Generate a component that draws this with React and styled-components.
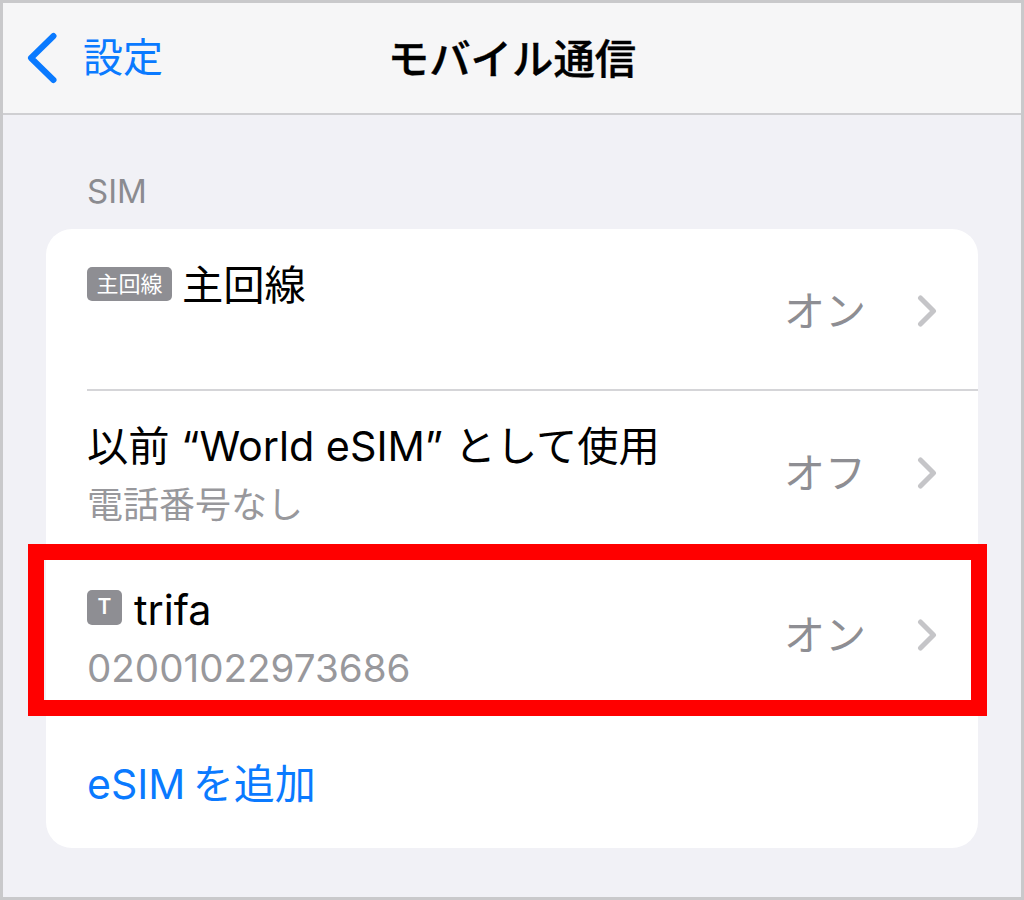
import React from "react";
import styled, { createGlobalStyle } from "styled-components";

const Global = createGlobalStyle`
  html, body { margin: 0; padding: 0; background: #fff; }
  body { font-family: "Inter", "Noto Sans CJK JP", sans-serif; }
`;

const Frame = styled.div`
  box-sizing: border-box;
  width: 1024px;
  height: 900px;
  border: 3px solid #c9c9cb;
  background: #f1f1f6;
  display: flex;
  flex-direction: column;
`;

const NavBar = styled.header`
  box-sizing: border-box;
  height: 112px;
  flex: none;
  background: #f6f6f7;
  border-bottom: 2px solid #cfcfd2;
  display: grid;
  grid-template-columns: 1fr auto 1fr;
  align-items: center;
`;

const Back = styled.div`
  display: flex;
  align-items: center;
  gap: 25px;
  margin-left: 23px;
  color: #0a7aff;
  font-size: 40px;
  line-height: 48px;
`;

const Title = styled.h1`
  margin: 2px 0 0;
  font-size: 41.4px;
  line-height: 48px;
  font-weight: 500;
  -webkit-text-stroke: 0.4px #000;
  color: #000;
`;

const Content = styled.main`
  flex: 1;
  padding: 54px 43px 48px;
  display: flex;
  flex-direction: column;
`;

const SectionLabel = styled.div`
  font-size: 33px;
  line-height: 44px;
  color: #8b8b90;
  padding-left: 41px;
  margin-bottom: 16px;
`;

const Card = styled.section`
  background: #fff;
  border-radius: 26px;
  display: flex;
  flex-direction: column;
  position: relative;
`;

const Row = styled.div`
  box-sizing: border-box;
  height: ${(p) => p.$h}px;
  display: flex;
  align-items: flex-start;
  justify-content: space-between;
  padding: ${(p) => p.$top}px 41px 0 41px;
  position: relative;
`;

const Divider = styled.div`
  height: 1.5px;
  margin-left: 41px;
  background: #d5d5d8;
`;

const Texts = styled.div`
  display: flex;
  flex-direction: column;
`;

const Main = styled.div`
  display: flex;
  align-items: center;
  gap: ${(p) => p.$gap || 10}px;
  font-size: 41.3px;
  line-height: 52px;
  color: #000;
  white-space: nowrap;
`;

const Sub = styled.div`
  font-size: ${(p) => p.$size || 36}px;
  line-height: 46px;
  margin-top: ${(p) => p.$mt || 10}px;
  color: #98989c;
  white-space: nowrap;
`;

const Badge = styled.span`
  box-sizing: border-box;
  height: 34px;
  width: 85px;
  margin-bottom: 2px;
  border-radius: 5px;
  background: #8e8e93;
  color: #fff;
  font-size: 22px;
  line-height: 34px;
  display: inline-flex;
  align-items: center;
  justify-content: center;
  flex: none;
`;

const SquareBadge = styled(Badge)`
  width: 35px;
  height: 35px;
  font-size: 21px;
  font-weight: 600;
  margin-bottom: 5px;
`;

const Accessory = styled.div`
  display: flex;
  align-items: center;
  gap: 51px;
  color: #8e8e93;
  font-size: 41px;
  line-height: 52px;
  position: absolute;
  right: 41px;
  top: ${(p) => p.$top}px;
`;

const AddLink = styled.div`
  font-size: 41px;
  line-height: 52px;
  color: #0a7aff;
  word-spacing: -4px;
`;

const Highlight = styled.div`
  position: absolute;
  left: -18px;
  right: -9px;
  top: 315px;
  height: 172px;
  box-sizing: border-box;
  border: 16px solid #ff0000;
  pointer-events: none;
`;

const Chevron = () => (
  <svg width="20" height="34" viewBox="0 0 20 34" fill="none">
    <path d="M3.5 4 L16.5 17 L3.5 30" stroke="#c5c5c8" strokeWidth="5" strokeLinecap="round" strokeLinejoin="round" />
  </svg>
);

const BackChevron = () => (
  <svg width="32" height="52" viewBox="0 0 32 52" fill="none">
    <path d="M27.5 4 L5 26 L27.5 48" stroke="#0a7aff" strokeWidth="6" strokeLinecap="round" strokeLinejoin="round" />
  </svg>
);

const Value = ({ top, children }) => (
  <Accessory $top={top}>
    <span>{children}</span>
    <Chevron />
  </Accessory>
);

export default function App() {
  return (
    <>
      <Global />
      <Frame>
        <NavBar>
          <Back>
            <BackChevron />
            <span>設定</span>
          </Back>
          <Title>モバイル通信</Title>
          <span />
        </NavBar>
        <Content>
          <SectionLabel>SIM</SectionLabel>
          <Card>
            <Row $h={160} $top={30}>
              <Main>
                <Badge>主回線</Badge>
                <span>主回線</span>
              </Main>
              <Value top={56}>オン</Value>
            </Row>
            <Divider />
            <Row $h={163} $top={29}>
              <Texts>
                <Main>以前 “World eSIM” として使用</Main>
                <Sub>電話番号なし</Sub>
              </Texts>
              <Value top={56}>オフ</Value>
            </Row>
            <Row $h={157} $top={30}>
              <Texts>
                <Main $gap={12}>
                  <SquareBadge>T</SquareBadge>
                  <span>trifa</span>
                </Main>
                <Sub $size={38.6} $mt={9}>02001022973686</Sub>
              </Texts>
              <Value top={55}>オン</Value>
            </Row>
            <Row $h={137} $top={47}>
              <AddLink>eSIM を追加</AddLink>
            </Row>
            <Highlight />
          </Card>
        </Content>
      </Frame>
    </>
  );
}
